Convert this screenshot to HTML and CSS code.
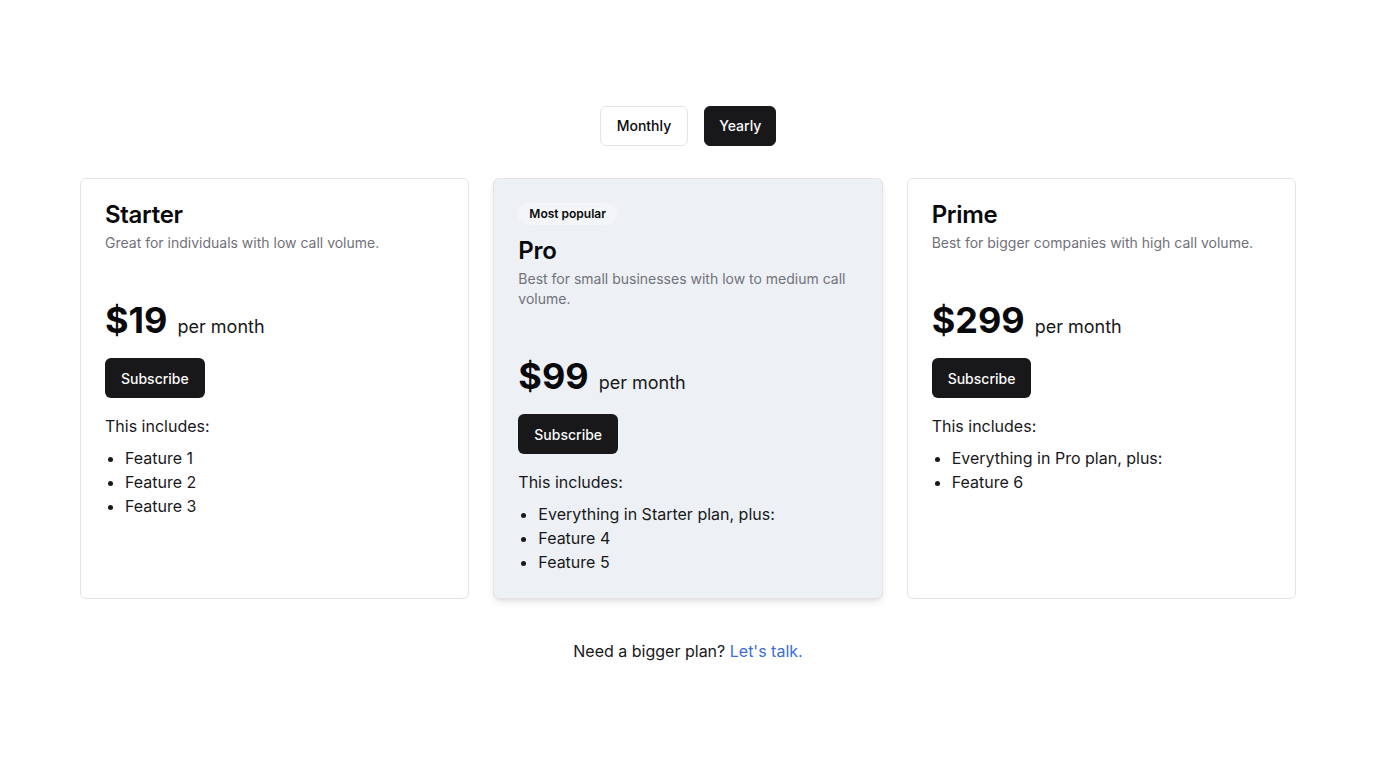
FILE: index.html
```html
<!DOCTYPE html>
<html lang="en">
<head>
<meta charset="utf-8">
<title>Pricing</title>
<link rel="stylesheet" href="styles.css">
</head>
<body>
<main class="page">
  <div class="toggle">
    <button class="tbtn tbtn-outline">Monthly</button>
    <button class="tbtn tbtn-dark">Yearly</button>
  </div>
  <section class="plans">
    <article class="card">
      <h3 class="plan-name">Starter</h3>
      <p class="plan-desc">Great for individuals with low call volume.</p>
      <div class="price"><span class="amount">$19</span><span class="per">per month</span></div>
      <button class="subscribe">Subscribe</button>
      <p class="includes">This includes:</p>
      <ul class="features">
        <li>Feature 1</li>
        <li>Feature 2</li>
        <li>Feature 3</li>
      </ul>
    </article>
    <article class="card card-popular">
      <span class="badge">Most popular</span>
      <h3 class="plan-name">Pro</h3>
      <p class="plan-desc">Best for small businesses with low to medium call volume.</p>
      <div class="price"><span class="amount">$99</span><span class="per">per month</span></div>
      <button class="subscribe">Subscribe</button>
      <p class="includes">This includes:</p>
      <ul class="features">
        <li>Everything in Starter plan, plus:</li>
        <li>Feature 4</li>
        <li>Feature 5</li>
      </ul>
    </article>
    <article class="card">
      <h3 class="plan-name">Prime</h3>
      <p class="plan-desc">Best for bigger companies with high call volume.</p>
      <div class="price"><span class="amount">$299</span><span class="per">per month</span></div>
      <button class="subscribe">Subscribe</button>
      <p class="includes">This includes:</p>
      <ul class="features">
        <li>Everything in Pro plan, plus:</li>
        <li>Feature 6</li>
      </ul>
    </article>
  </section>
  <p class="footer-note">Need a bigger plan? <a href="#" class="talk">Let's talk.</a></p>
</main>
</body>
</html>
```

FILE: styles.css
```css
* { box-sizing: border-box; }
html, body { margin: 0; padding: 0; background: #ffffff; }
body {
  font-family: Inter, "Noto Sans", sans-serif;
  color: #09090b;
}
.page {
  width: 1216px;
  margin: 0 auto;
  padding-top: 106px;
  display: flex;
  flex-direction: column;
  align-items: center;
}
.toggle {
  display: flex;
  gap: 16px;
}
.tbtn {
  font-family: inherit;
  font-size: 14px;
  font-weight: 500;
  height: 40px;
  padding: 0 16px;
  border-radius: 6px;
  cursor: pointer;
  line-height: 20px;
}
.tbtn-outline {
  background: #ffffff;
  color: #09090b;
  border: 1px solid #e4e4e7;
}
.tbtn-dark {
  background: #18181b;
  color: #fafafa;
  border: 1px solid #18181b;
  padding: 0 14px;
}
.plans {
  margin-top: 32px;
  width: 100%;
  display: grid;
  grid-template-columns: repeat(3, 1fr);
  gap: 24px;
}
.card {
  border: 1px solid #e4e4e7;
  border-radius: 6px;
  background: #ffffff;
  padding: 24px;
  display: flex;
  flex-direction: column;
  align-items: flex-start;
}
.card-popular {
  background: #edf1f5;
  box-shadow: 0 4px 8px -2px rgba(0,0,0,0.12), 0 2px 4px -2px rgba(0,0,0,0.08);
}
.badge {
  font-size: 12px;
  font-weight: 600;
  line-height: 16px;
  padding: 3px 11px;
  border-radius: 999px;
  background: #f3f5f8;
  color: #09090b;
  margin-bottom: 14px;
}
.plan-name {
  margin: 0;
  font-size: 24px;
  line-height: 24px;
  font-weight: 600;
  letter-spacing: -0.3px;
}
.plan-desc {
  margin: 6px 0 0;
  font-size: 14px;
  line-height: 20px;
  color: #71717a;
}
.price {
  margin-top: 47px;
  display: flex;
  align-items: baseline;
  gap: 10px;
}
.amount {
  font-size: 36px;
  line-height: 40px;
  font-weight: 700;
}
.per {
  font-size: 18px;
  line-height: 28px;
  color: #18181b;
}
.subscribe {
  margin-top: 17px;
  font-family: inherit;
  font-size: 14px;
  font-weight: 500;
  height: 40px;
  padding: 0 16px;
  border: none;
  border-radius: 6px;
  background: #18181b;
  color: #fafafa;
  cursor: pointer;
}
.includes {
  margin: 16px 0 0;
  font-size: 16px;
  line-height: 24px;
  color: #18181b;
}
.features {
  margin: 8px 0 0;
  padding-left: 20px;
  font-size: 16px;
  line-height: 24px;
  color: #18181b;
}
.footer-note {
  margin: 40px 0 0;
  font-size: 16px;
  line-height: 24px;
  color: #18181b;
}
.talk {
  color: #3b6fd6;
  text-decoration: none;
}
```
